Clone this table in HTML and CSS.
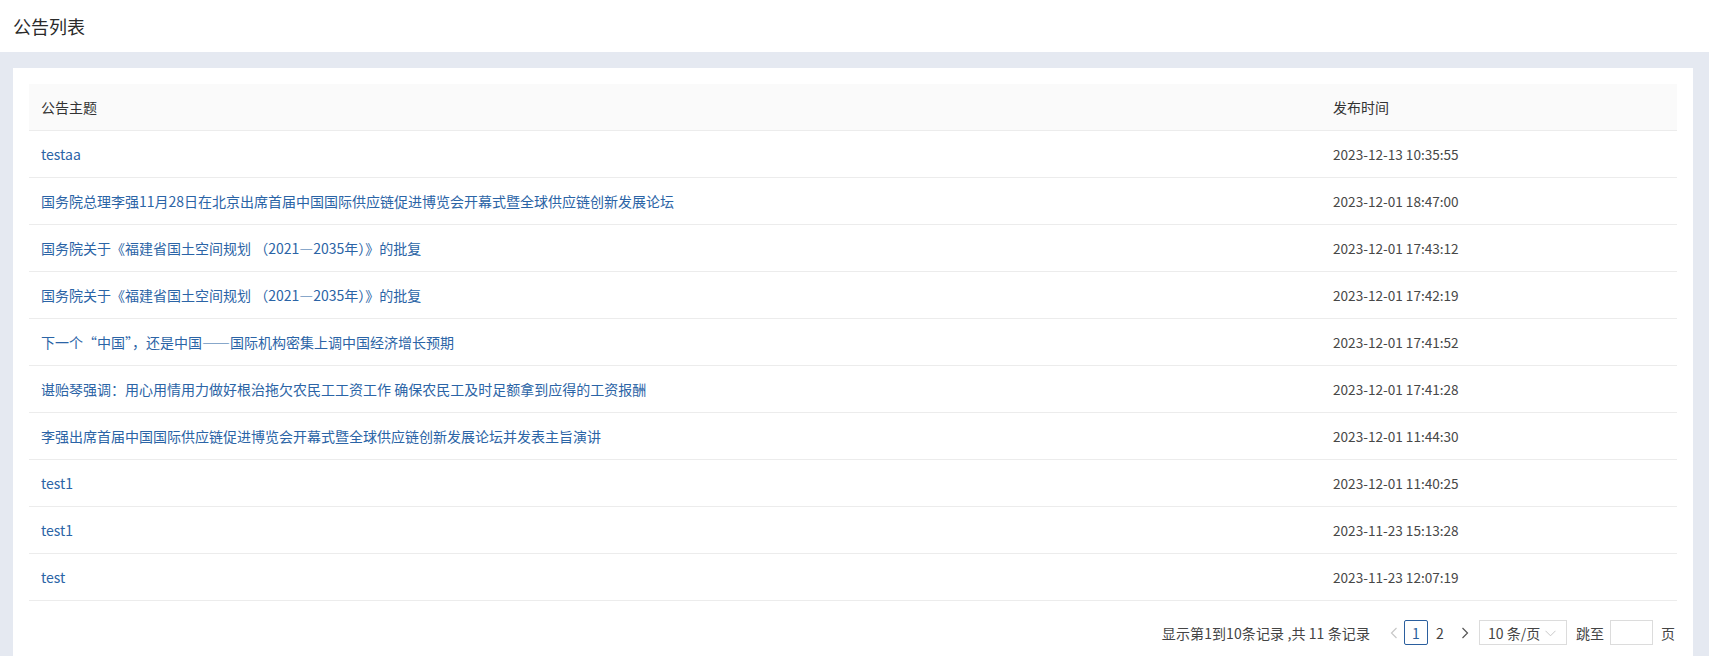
FILE: index.html
```html
<!DOCTYPE html>
<html lang="zh-CN">
<head>
<meta charset="utf-8">
<title>公告列表</title>
<link rel="stylesheet" href="styles.css">
</head>
<body>
<header class="topbar"><h1 class="page-title">公告列表</h1></header>
<main class="main">
  <section class="card">
    <table class="notice-table">
      <colgroup><col class="col-title"><col class="col-time"></colgroup>
      <thead>
        <tr><th>公告主题</th><th>发布时间</th></tr>
      </thead>
      <tbody>
        <tr><td><a href="#" class="link">testaa</a></td><td class="time">2023-12-13 10:35:55</td></tr>
        <tr><td><a href="#" class="link">国务院总理李强11月28日在北京出席首届中国国际供应链促进博览会开幕式暨全球供应链创新发展论坛</a></td><td class="time">2023-12-01 18:47:00</td></tr>
        <tr><td><a href="#" class="link">国务院关于《福建省国土空间规划 （2021—2035年）》的批复</a></td><td class="time">2023-12-01 17:43:12</td></tr>
        <tr><td><a href="#" class="link">国务院关于《福建省国土空间规划 （2021—2035年）》的批复</a></td><td class="time">2023-12-01 17:42:19</td></tr>
        <tr><td><a href="#" class="link">下一个“中国”，还是中国——国际机构密集上调中国经济增长预期</a></td><td class="time">2023-12-01 17:41:52</td></tr>
        <tr><td><a href="#" class="link">谌贻琴强调：用心用情用力做好根治拖欠农民工工资工作 确保农民工及时足额拿到应得的工资报酬</a></td><td class="time">2023-12-01 17:41:28</td></tr>
        <tr><td><a href="#" class="link">李强出席首届中国国际供应链促进博览会开幕式暨全球供应链创新发展论坛并发表主旨演讲</a></td><td class="time">2023-12-01 11:44:30</td></tr>
        <tr><td><a href="#" class="link">test1</a></td><td class="time">2023-12-01 11:40:25</td></tr>
        <tr><td><a href="#" class="link">test1</a></td><td class="time">2023-11-23 15:13:28</td></tr>
        <tr><td><a href="#" class="link">test</a></td><td class="time">2023-11-23 12:07:19</td></tr>
      </tbody>
    </table>
    <div class="pager">
      <span class="pager-info">显示第1到10条记录 ,共 11 条记录</span>
      <span class="pg-btn pg-prev"><svg width="8" height="12" viewBox="0 0 8 12"><polyline points="6.5,1 1.5,6 6.5,11" fill="none" stroke="#c8c8c8" stroke-width="1.2"/></svg></span>
      <span class="pg-btn pg-current">1</span>
      <span class="pg-btn pg-num">2</span>
      <span class="pg-btn pg-next"><svg width="8" height="12" viewBox="0 0 8 12"><polyline points="1.5,1 6.5,6 1.5,11" fill="none" stroke="#555" stroke-width="1.2"/></svg></span>
      <span class="pg-size">10 条/页<svg class="pg-caret" width="11" height="7" viewBox="0 0 11 7"><polyline points="0.5,0.8 5.5,5.8 10.5,0.8" fill="none" stroke="#c8c8c8" stroke-width="1"/></svg></span>
      <span class="pg-jump">跳至</span>
      <span class="pg-input"></span>
      <span class="pg-unit">页</span>
    </div>
  </section>
</main>
</body>
</html>
```

FILE: styles.css
```css
html, body {
  margin: 0;
  padding: 0;
}
body {
  background: #e5e9f1;
  font-family: "Noto Sans CJK SC", "Noto Sans", sans-serif;
  color: #333;
  height: 656px;
  overflow: hidden;
}
.topbar {
  height: 52px;
  background: #fff;
  display: flex;
  align-items: center;
  padding-left: 13px;
}
.page-title {
  margin: 0;
  font-size: 18px;
  font-weight: 400;
  color: #2a2a2a;
  line-height: 1;
}
.main {
  padding: 16px 16px 0 13px;
}
.card {
  background: #fff;
  padding: 16px 16px 0 16px;
  height: 588px;
  box-sizing: border-box;
}
.notice-table {
  width: 100%;
  border-collapse: collapse;
  table-layout: fixed;
  font-size: 14px;
}
.col-time {
  width: 356px;
}
.notice-table th {
  background: #fafafa;
  font-weight: 400;
  text-align: left;
  color: #333;
  height: 46px;
  padding: 0 12px;
  border-bottom: 1px solid #ececec;
}
.notice-table td {
  height: 46px;
  padding: 0 12px;
  border-bottom: 1px solid #ececec;
  white-space: nowrap;
}
.link {
  color: #2b64a6;
  text-decoration: none;
}
.time {
  color: #474747;
  font-size: 13.6px;
}
.pager {
  display: flex;
  justify-content: flex-end;
  align-items: center;
  padding-top: 19px;
  padding-right: 2px;
  font-size: 14px;
  color: #444;
}
.pager-info {
  margin-right: 14px;
  letter-spacing: 0.1px;
}
.pg-btn {
  display: inline-flex;
  align-items: center;
  justify-content: center;
  height: 25px;
  box-sizing: border-box;
}
.pg-prev {
  width: 20px;
}
.pg-current {
  width: 24px;
  border: 1px solid #2b5f9e;
  border-radius: 2px;
  color: #2b5f9e;
  margin-right: 1px;
}
.pg-num {
  width: 22px;
  color: #444;
}
.pg-next {
  width: 27px;
  margin-right: 1px;
}
.pg-size {
  display: inline-flex;
  align-items: center;
  justify-content: space-between;
  width: 88px;
  height: 25px;
  box-sizing: border-box;
  border: 1px solid #dcdcdc;
  padding: 0 10px 0 8px;
  color: #444;
}
.pg-caret {
  margin-top: 1px;
}
.pg-jump {
  margin-left: 9px;
}
.pg-input {
  width: 43px;
  height: 25px;
  box-sizing: border-box;
  border: 1px solid #dcdcdc;
  margin-left: 6px;
}
.pg-unit {
  margin-left: 8px;
}
```
